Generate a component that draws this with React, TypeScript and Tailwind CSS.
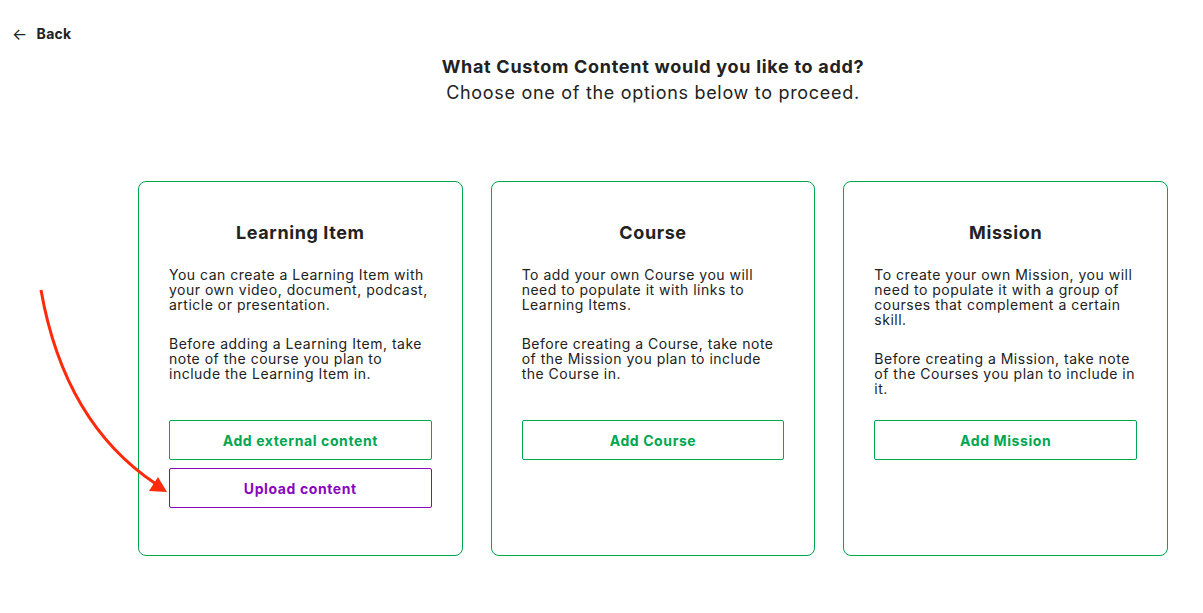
import { ReactNode } from "react";

const cards: {
  title: string;
  paras: string[][];
  buttons: { label: string; purple?: boolean }[];
}[] = [
  {
    title: "Learning Item",
    paras: [
      ["You can create a Learning Item with", "your own video, document, podcast,", "article or presentation."],
      ["Before adding a Learning Item, take", "note of the course you plan to", "include the Learning Item in."],
    ],
    buttons: [{ label: "Add external content" }, { label: "Upload content", purple: true }],
  },
  {
    title: "Course",
    paras: [
      ["To add your own Course you will", "need to populate it with links to", "Learning Items."],
      ["Before creating a Course, take note", "of the Mission you plan to include", "the Course in."],
    ],
    buttons: [{ label: "Add Course" }],
  },
  {
    title: "Mission",
    paras: [
      ["To create your own Mission, you will", "need to populate it with a group of", "courses that complement a certain", "skill."],
      ["Before creating a Mission, take note", "of the Courses you plan to include in", "it."],
    ],
    buttons: [{ label: "Add Mission" }],
  },
];

function Lines({ lines }: { lines: string[] }) {
  return (
    <p className="text-[14px] leading-[15px] tracking-[0.5px] text-[#222]">
      {lines.map((l) => (
        <span key={l} className="block whitespace-nowrap">
          {l}
        </span>
      ))}
    </p>
  );
}

function Card({ title, children, buttons }: { title: string; children: ReactNode; buttons: ReactNode }) {
  return (
    <div className="h-[375px] rounded-[8px] border border-[#00a651] px-[30px] pt-[39px]">
      <div className="h-[199px]">
        <h2 className="text-center text-[18px] leading-[24px] font-bold tracking-[0.6px] text-[#222]">{title}</h2>
        <div className="mt-[22px] flex flex-col gap-[24px]">{children}</div>
      </div>
      <div className="flex flex-col gap-[8px]">{buttons}</div>
    </div>
  );
}

export default function App() {
  return (
    <div
      className="relative h-[613px] bg-white text-[#222]"
      style={{ fontFamily: "Inter, 'Noto Sans', sans-serif" }}
    >
      <div className="flex items-center gap-[9px] px-[12px] pt-[24px] text-[14px] leading-[20px] font-bold tracking-[0.3px]">
        <span className="text-[16px] font-normal">←</span>
        <span>Back</span>
      </div>

      <div className="pl-[138px] pr-[35px]">
        <div className="mt-[10px] text-center text-[18px] leading-[26px] tracking-[0.7px]">
          <div className="font-bold">What Custom Content would you like to add?</div>
          <div>Choose one of the options below to proceed.</div>
        </div>

        <div className="mt-[75px] grid grid-cols-3 gap-[28px]">
          {cards.map((c) => (
            <Card
              key={c.title}
              title={c.title}
              buttons={c.buttons.map((b) => (
                <button
                  key={b.label}
                  className={
                    b.purple
                      ? "h-[40px] rounded-[2px] border border-[#8a05be] text-[14px] font-bold tracking-[0.6px] text-[#8a05be]"
                      : "h-[40px] rounded-[2px] border border-[#00a651] text-[14px] font-bold tracking-[0.6px] text-[#00a651]"
                  }
                >
                  {b.label}
                </button>
              ))}
            >
              {c.paras.map((p, i) => (
                <Lines key={i} lines={p} />
              ))}
            </Card>
          ))}
        </div>
      </div>

      <svg className="pointer-events-none absolute left-0 top-0" width="200" height="520">
        <path
          d="M41 290 C 55 370, 90 440, 156 484"
          fill="none"
          stroke="#ff2a0a"
          strokeWidth="3"
        />
        <polygon points="149,491 158,477 167,492" fill="#ff2a0a" />
      </svg>
    </div>
  );
}
